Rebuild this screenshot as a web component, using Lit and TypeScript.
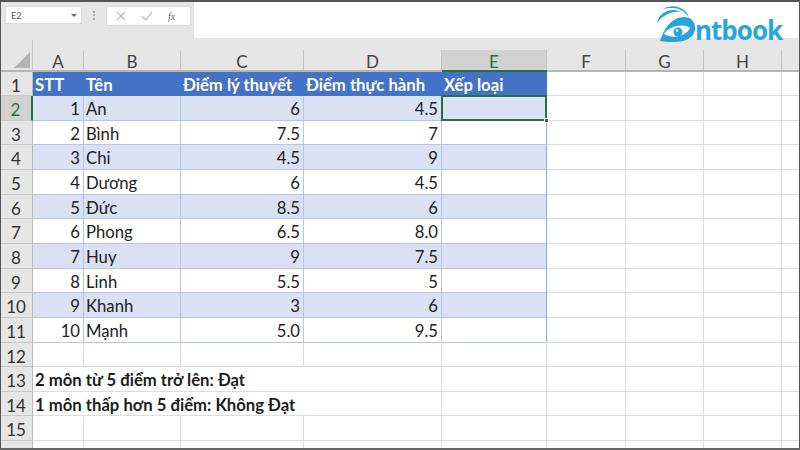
import { LitElement, html, css } from "lit";
import { customElement } from "lit/decorators.js";
import { classMap } from "lit/directives/class-map.js";

const COLS = ["A", "B", "C", "D", "E", "F", "G", "H", ""];
const RECORDS = [
  ["1", "An", "6", "4.5"],
  ["2", "Bình", "7.5", "7"],
  ["3", "Chi", "4.5", "9"],
  ["4", "Dương", "6", "4.5"],
  ["5", "Đức", "8.5", "6"],
  ["6", "Phong", "6.5", "8.0"],
  ["7", "Huy", "9", "7.5"],
  ["8", "Linh", "5.5", "5"],
  ["9", "Khanh", "3", "6"],
  ["10", "Mạnh", "5.0", "9.5"],
];
const HEAD = ["STT", "Tên", "Điểm lý thuyết", "Điểm thực hành", "Xếp loại"];

@customElement("app-root")
export class AppRoot extends LitElement {
  static styles = css`
    :host {
      display: block;
      width: 800px;
      height: 450px;
      overflow: hidden;
      position: relative;
      background: #e6e6e6;
      font-family: Lato, "Open Sans", sans-serif;
      color: #222;
    }
    .top-edge {
      height: 2px;
      background: #555;
    }
    .formula {
      height: 38px;
      display: flex;
      align-items: flex-start;
      padding-top: 4px;
      box-sizing: border-box;
      background: #e6e6e6;
    }
    .name-box {
      width: 77px;
      height: 18px;
      margin-left: 5px;
      background: #fff;
      border: 1px solid #dcdcdc;
      box-sizing: border-box;
      display: flex;
      align-items: center;
      justify-content: space-between;
      padding: 0 4px 0 5px;
      font-size: 9px;
      color: #555;
    }
    .caret {
      width: 0;
      height: 0;
      border: 3px solid transparent;
      border-top: 3px solid #666;
      margin-top: 3px;
    }
    .dots {
      width: 2px;
      height: 9px;
      margin: 5px 11px 0 11px;
      border-left: 2px dotted #aaa;
      box-sizing: border-box;
    }
    .fx-box {
      width: 85px;
      height: 20px;
      background: #fff;
      border: 1px solid #dcdcdc;
      box-sizing: border-box;
      display: flex;
      align-items: center;
      gap: 15px;
      padding-left: 9px;
    }
    .fx {
      font-family: "Liberation Serif", serif;
      font-style: italic;
      font-size: 10px;
      color: #666;
    }
    .input {
      flex: 1;
      height: 36px;
      margin-top: -4px;
      margin-left: 3px;
      background: #fff;
    }
    .sheet {
      display: grid;
      grid-template-columns: 33px 51px 97px 123px 138px 105px 79px 78px 78px 18px;
      grid-template-rows: 31.5px repeat(15, 24.65px) 20px;
      background: #fff;
    }
    .corner {
      background: #e6e6e6;
      padding: 12px 0 0 14px;
      box-sizing: border-box;
      border-right: 1px solid #c8c8c8;
      border-bottom: 2px solid #b5b5b5;
    }
    .corner i {
      display: block;
      width: 0;
      height: 0;
      border-left: 16px solid transparent;
      border-bottom: 16px solid #b4b4b4;
    }
    .col {
      background: #e6e6e6;
      padding-top: 10px;
      box-sizing: border-box;
      border-bottom: 2px solid #b5b5b5;
    }
    .col div {
      height: 100%;
      border-right: 1px solid #c4c4c4;
      box-sizing: border-box;
      font-size: 17px;
      line-height: 23px;
      text-align: center;
      color: #444;
    }
    .col.on {
      border-bottom-color: #217346;
      background: linear-gradient(#e6e6e6 10px, #d2d2d2 10px);
    }
    .col.on div {
      color: #217346;
    }
    .row {
      background: #e6e6e6;
      border-right: 1px solid #bbb;
      border-bottom: 1px solid #c8c8c8;
      box-sizing: border-box;
      font-size: 17px;
      text-align: center;
      line-height: 24px;
      padding-top: 2px;
      color: #333;
    }
    .row.on {
      background: #d2d2d2;
      color: #217346;
      border-right: 2px solid #217346;
    }
    .cell {
      border-right: 1px solid #dcdcdc;
      border-bottom: 1px solid #dcdcdc;
      box-sizing: border-box;
      font-size: 16.7px;
      line-height: 24px;
      padding: 1px 3px 0 2px;
      white-space: nowrap;
      color: #222;
      min-width: 0;
    }
    .num {
      text-align: right;
    }
    .th {
      background: #4472c4;
      color: #fff;
      font-weight: 700;
      border: none;
    }
    .band {
      background: #d9e1f2;
    }
    .t {
      border-right: 1px solid #b4c6e7;
      border-bottom: 1px solid #b4c6e7;
    }
    .t.edge {
      border-right-color: #8eaadb;
    }
    .note {
      font-weight: 700;
      border-right: none;
      color: #1d1d1d;
    }
    .sel {
      position: relative;
    }
    .sel::after {
      content: "";
      position: absolute;
      inset: -1px -1px -1px -1px;
      border: 2px solid #217346;
      pointer-events: none;
    }
    .sel::before {
      content: "";
      position: absolute;
      right: -3px;
      bottom: -3px;
      width: 5px;
      height: 5px;
      background: #217346;
      border: 1px solid #fff;
      box-sizing: border-box;
      z-index: 1;
    }
    .logo {
      position: absolute;
      left: 654px;
      top: 4px;
      width: 135px;
      height: 40px;
    }
    .logo svg {
      position: absolute;
      left: 0;
      top: 0;
    }
    .logo span {
      position: absolute;
      left: 41px;
      top: 11px;
      font-family: "Open Sans", sans-serif;
      font-weight: 700;
      font-size: 26px;
      line-height: 30px;
      letter-spacing: -1px;
      color: #29a5dc;
    }
    .edge-l,
    .edge-r {
      position: absolute;
      top: 0;
      bottom: 0;
      width: 1px;
      background: #555;
    }
    .edge-l {
      left: 0;
    }
    .edge-r {
      right: 0;
    }
    .bottom-edge {
      position: absolute;
      left: 0;
      right: 0;
      bottom: 0;
      height: 2px;
      background: #666;
    }
  `;

  renderRecordRow(rec: string[], i: number) {
    const band = i % 2 === 0;
    const base = { cell: true, t: true, band };
    return html`
      <div class=${classMap({ row: true, on: i === 0 })}>${i + 2}</div>
      <div class=${classMap({ ...base, num: true })}>${rec[0]}</div>
      <div class=${classMap(base)}>${rec[1]}</div>
      <div class=${classMap({ ...base, num: true })}>${rec[2]}</div>
      <div class=${classMap({ ...base, num: true })}>${rec[3]}</div>
      <div class=${classMap({ ...base, edge: true, sel: i === 0 })}></div>
      ${this.blanks(4)}
    `;
  }

  blanks(n: number) {
    return Array.from({ length: n }, () => html`<div class="cell"></div>`);
  }

  renderNote(rowNo: number, text: string) {
    return html`
      <div class="row">${rowNo}</div>
      <div class="cell note" style="grid-column: span 3">${text}</div>
      ${this.blanks(6)}
    `;
  }

  renderEmpty(rowNo: number) {
    return html`<div class="row">${rowNo}</div>${this.blanks(9)}`;
  }

  render() {
    return html`
      <div class="top-edge"></div>
      <div class="formula">
        <div class="name-box">E2<span class="caret"></span></div>
        <span class="dots"></span>
        <div class="fx-box">
          <svg width="10" height="10" viewBox="0 0 10 10">
            <path d="M1 1l8 8M9 1l-8 8" stroke="#bdbdbd" stroke-width="1.2" fill="none" />
          </svg>
          <svg width="12" height="10" viewBox="0 0 12 10">
            <path d="M1 5l3.500 4L11 1" stroke="#bdbdbd" stroke-width="1.2" fill="none" />
          </svg>
          <span class="fx">fx</span>
        </div>
        <div class="input"></div>
      </div>
      <div class="sheet">
        <div class="corner"><i></i></div>
        ${COLS.map(
          (c) => html`<div class=${classMap({ col: true, on: c === "E" })}><div>${c}</div></div>`
        )}

        <div class="row">1</div>
        ${HEAD.map((h) => html`<div class="cell th">${h}</div>`)}
        ${this.blanks(4)}

        ${RECORDS.map((r, i) => this.renderRecordRow(r, i))}
        ${this.renderEmpty(12)}
        ${this.renderNote(13, "2 môn từ 5 điểm trở lên: Đạt")}
        ${this.renderNote(14, "1 môn thấp hơn 5 điểm: Không Đạt")}
        ${this.renderEmpty(15)}
        ${this.renderEmpty(16)}
      </div>
      <div class="logo">
        <svg width="44" height="40" viewBox="0 0 44 40">
          <path d="M3 19C5 11 11 6 19 6c3 0 5 .5 7 2-7-1-16 2-23 11z" fill="#29a5dc" />
          <path d="M9 5c6-4 16-4 22 2 2 2 3 4 4 6-5-6-11-9-16-9-4 0-7 0-10 1z" fill="#29a5dc" />
          <path d="M6 37C10 24 18 13 30 13c8 0 12 6 11 13-1 8-11 12-19 12-7 0-12 0-16-1z" fill="#29a5dc" />
          <path d="M10 30c5-8 20-11 26-6-3 7-16 12-26 6z" fill="#fff" />
          <circle cx="24" cy="28" r="4.500" fill="#29a5dc" />
          <circle cx="23" cy="26.500" r="1.200" fill="#fff" />
        </svg>
        <span>ntbook</span>
      </div>
      <div class="edge-l"></div>
      <div class="edge-r"></div>
      <div class="bottom-edge"></div>
    `;
  }
}
